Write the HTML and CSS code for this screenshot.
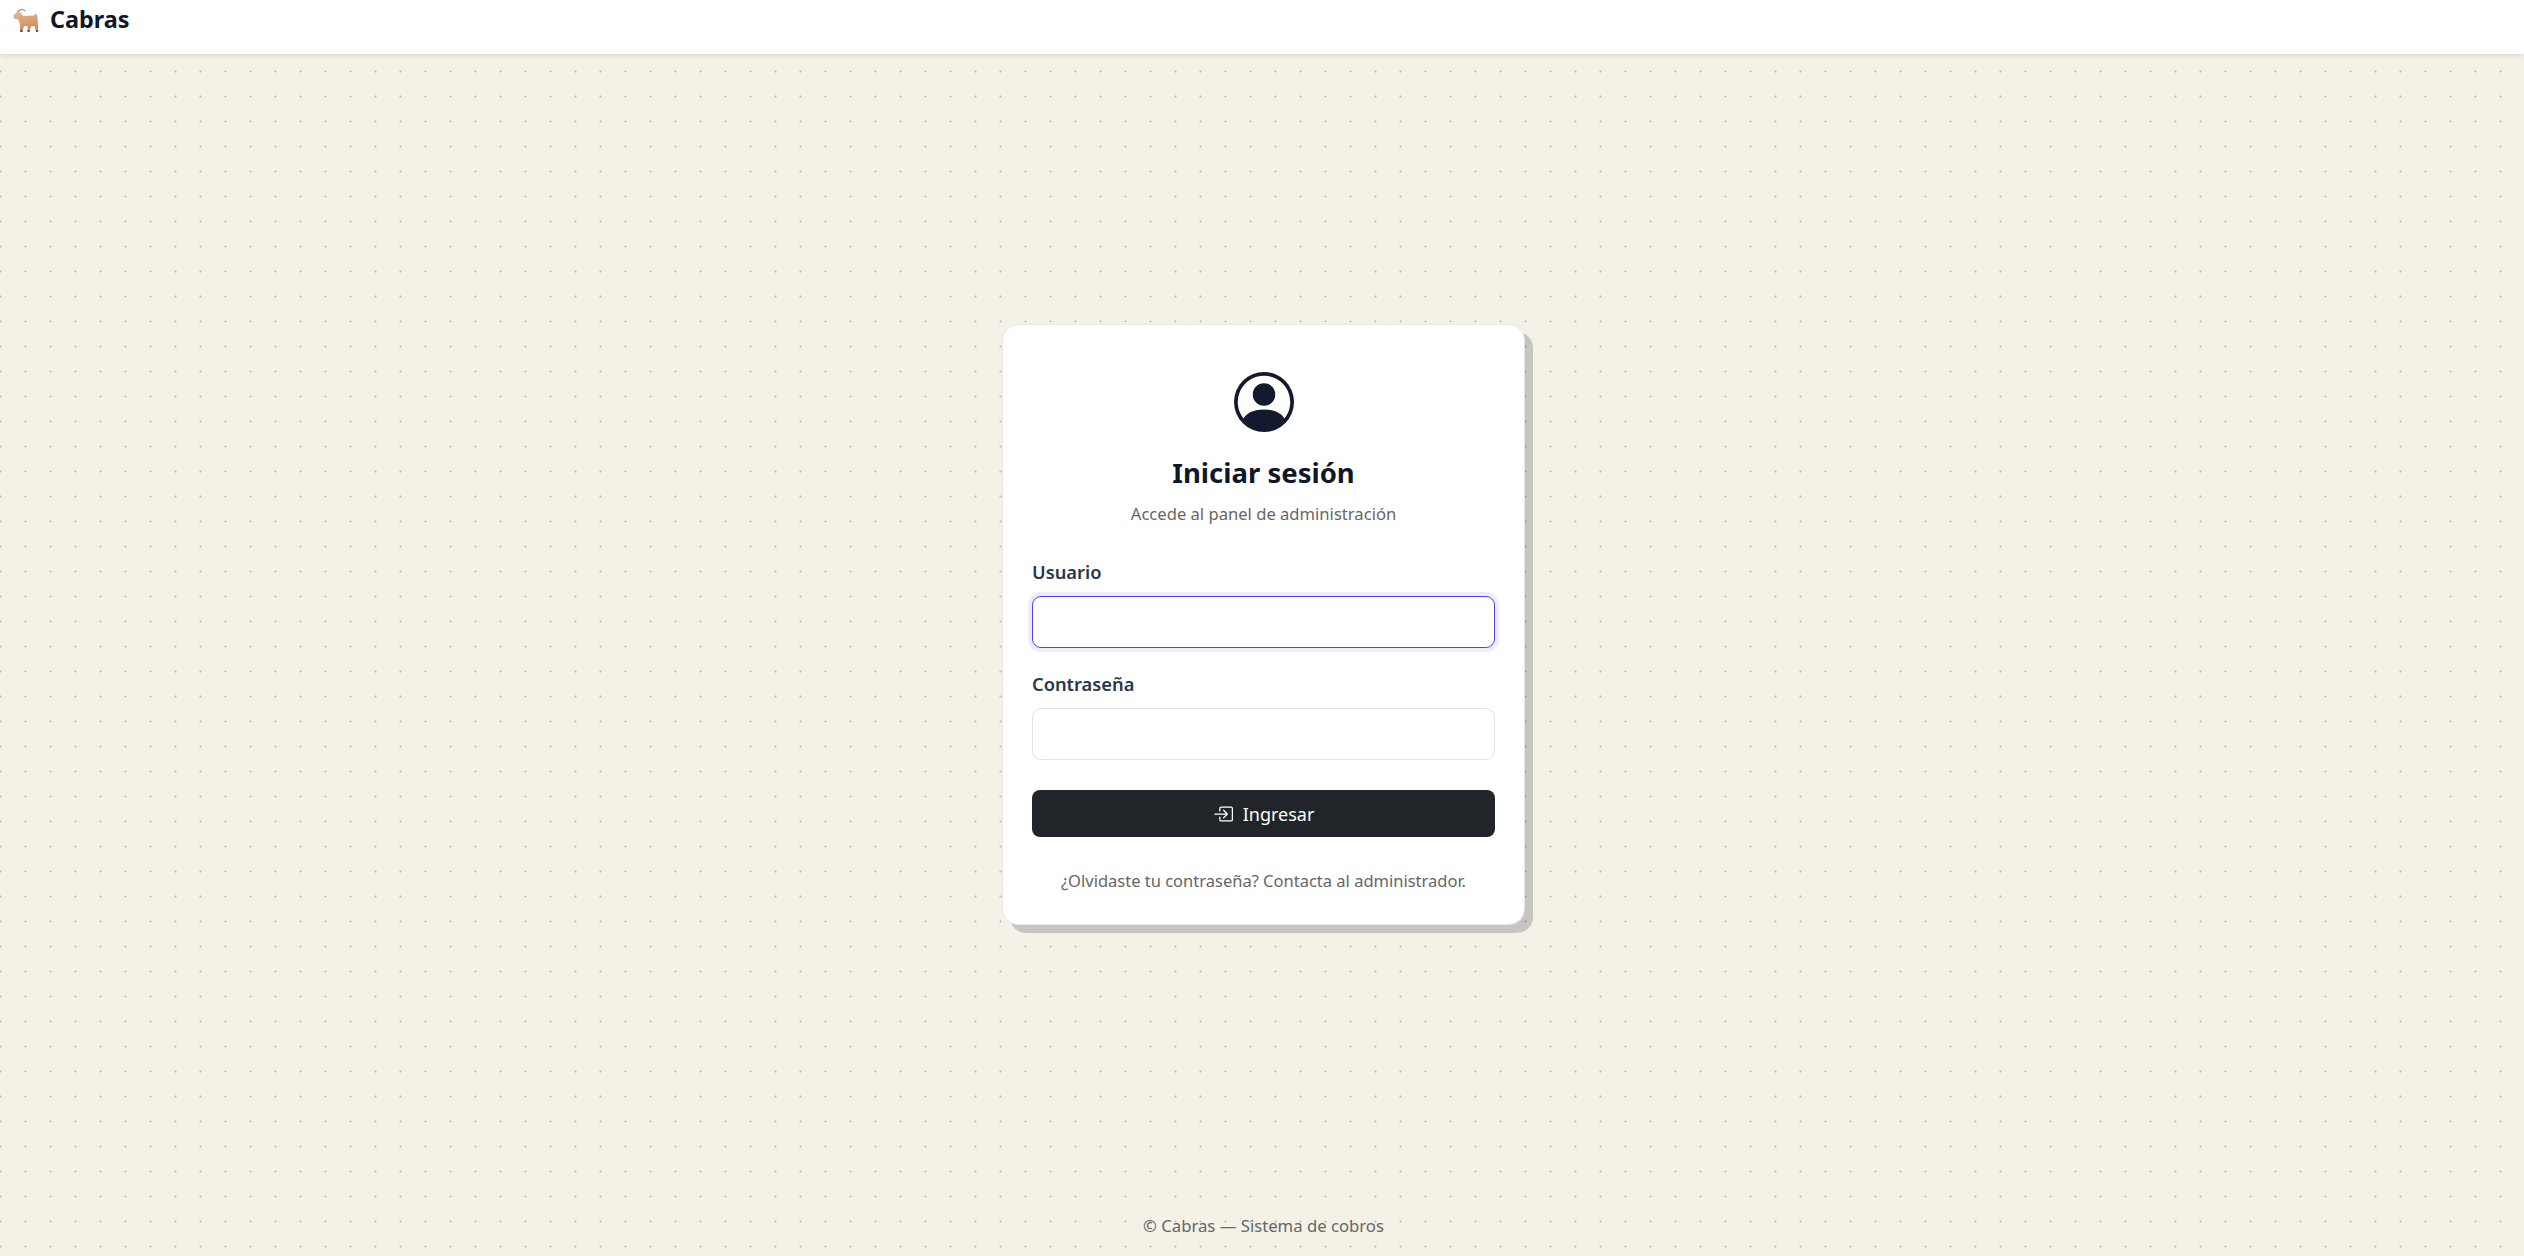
FILE: index.html
```html
<!DOCTYPE html>
<html lang="es">
<head>
    <meta charset="UTF-8">
    <meta name="viewport" content="width=device-width, initial-scale=1.0">
    <title>Cabras - Iniciar sesión</title>
    <link rel="stylesheet" href="styles.css">
</head>
<body>
    <div class="navbar">
        <svg class="goat" viewBox="0 0 28 28" width="28" height="28">
            <defs>
                <linearGradient id="goat-body" x1="0" y1="0" x2="0.3" y2="1">
                    <stop offset="0" stop-color="#e6b488"/>
                    <stop offset="1" stop-color="#cf8f5f"/>
                </linearGradient>
            </defs>
            <path d="M5 5 C6.5 1.5 10 0.5 13.5 3" fill="none" stroke="#a3a1a6" stroke-width="1.5"/>
            <path d="M1 7.5 L5 4.5 L9 4.5 L11 8 L22 7.5 L24 5.5 L25.2 7.5 L25.8 13 L26.2 23 L24 23.5 L22.6 18 L19 18.5 L17.5 23.5 L15.5 23.5 L15.5 18 L12 18 L10.5 23.5 L8 23.5 L8 16 L6 11 L2.5 11 Z" fill="url(#goat-body)"/>
            <path d="M8 22 H10.8 L10.5 24 H8 Z M15.5 22 H18 L17.5 24 H15.5 Z M23.8 22 H26.2 V24 H24 Z" fill="#7d4b55"/>
        </svg>
        <span class="brand">Cabras</span>
    </div>

    <div class="main">
        <div class="card">
            <svg class="avatar" viewBox="0 0 16 16" width="60" height="60">
                <path d="M11 6a3 3 0 1 1-6 0 3 3 0 0 1 6 0"/>
                <path fill-rule="evenodd" d="M0 8a8 8 0 1 1 16 0A8 8 0 0 1 0 8m8-7a7 7 0 0 0-5.468 11.37C3.242 11.226 4.805 10 8 10s4.757 1.225 5.468 2.37A7 7 0 0 0 8 1"/>
            </svg>
            <h1 class="title">Iniciar sesión</h1>
            <p class="subtitle">Accede al panel de administración</p>

            <form class="login-form">
                <label class="label" for="usuario">Usuario</label>
                <input class="input input-focus" id="usuario" type="text">

                <label class="label" for="clave">Contraseña</label>
                <input class="input" id="clave" type="password">

                <button class="button" type="button">
                    <svg viewBox="0 0 16 16" width="20" height="20" fill="currentColor">
                        <path fill-rule="evenodd" d="M6 3.5a.5.5 0 0 1 .5-.5h8a.5.5 0 0 1 .5.5v9a.5.5 0 0 1-.5.5h-8a.5.5 0 0 1-.5-.5v-2a.5.5 0 0 0-1 0v2A1.5 1.5 0 0 0 6.5 14h8a1.5 1.5 0 0 0 1.5-1.5v-9A1.5 1.5 0 0 0 14.5 2h-8A1.5 1.5 0 0 0 5 3.5v2a.5.5 0 0 0 1 0z"/>
                        <path fill-rule="evenodd" d="M11.854 8.354a.5.5 0 0 0 0-.708l-3-3a.5.5 0 1 0-.708.708L10.293 7.5H1.5a.5.5 0 0 0 0 1h8.793l-2.147 2.146a.5.5 0 0 0 .708.708z"/>
                    </svg>
                    Ingresar
                </button>
            </form>

            <p class="help">¿Olvidaste tu contraseña? Contacta al administrador.</p>
        </div>
    </div>

    <div class="footer">© Cabras — Sistema de cobros</div>
</body>
</html>
```

FILE: styles.css
```css
* {
    box-sizing: border-box;
}

body {
    font-family: "Noto Sans", sans-serif;
    margin: 0;
    min-height: 100vh;
    display: flex;
    flex-direction: column;
    background-color: #f4f1e6;
    background-image: radial-gradient(#bdbdbd 0.3px, #d4d4d0 1px, transparent 1.2px);
    background-size: 25px 25px;
    background-position: -12px 9px;
    color: #0f172a;
}

.navbar {
    height: 54px;
    background: white;
    box-shadow: 0 2px 6px rgba(0,0,0,0.1);
    display: flex;
    align-items: flex-start;
    gap: 10px;
    padding: 5px 12px;
}

.goat {
    margin-top: 3px;
}

.brand {
    font-size: 23.4px;
    font-weight: 700;
    line-height: 28px;
}

.main {
    flex: 1;
    display: flex;
    align-items: center;
    justify-content: center;
    padding-left: 3px;
}

.card {
    width: 523px;
    height: 601px;
    background: white;
    border: 1px solid #e6e6e6;
    border-radius: 16px;
    box-shadow: 8px 8px 0 rgba(15,23,42,0.2);
    padding: 47px 29px 0;
    text-align: center;
}

.avatar {
    display: block;
    margin: 0 auto;
    fill: #111a2e;
}

.title {
    font-size: 27.5px;
    line-height: 36px;
    font-weight: 700;
    margin: 23px 0 0;
}

.subtitle {
    font-size: 16.6px;
    line-height: 24px;
    color: #666;
    margin: 11px 0 0;
}

.login-form {
    display: flex;
    flex-direction: column;
    text-align: left;
    margin-top: 34px;
}

.label {
    font-size: 18.3px;
    font-weight: 600;
    line-height: 24px;
    color: #2b3648;
    margin-bottom: 12px;
}

.input {
    height: 52px;
    border: 1px solid #e2e2e2;
    border-radius: 9px;
    background: white;
    margin-bottom: 24px;
    outline: none;
}

.input-focus {
    border-color: #4f46e5;
    box-shadow: 0 0 0 4px rgba(79,70,229,0.1);
}

.button {
    height: 47px;
    margin-top: 6px;
    padding-top: 2px;
    background: #212529;
    color: white;
    border: none;
    border-radius: 8px;
    font-family: inherit;
    font-size: 18px;
    display: flex;
    align-items: center;
    justify-content: center;
    gap: 10px;
}

.help {
    font-size: 16.5px;
    line-height: 24px;
    color: #666;
    margin: 32px 0 0;
}

.footer {
    height: 62px;
    padding: 20px 0 0 3px;
    text-align: center;
    font-size: 16.7px;
    line-height: 24px;
    color: #666;
}
```
